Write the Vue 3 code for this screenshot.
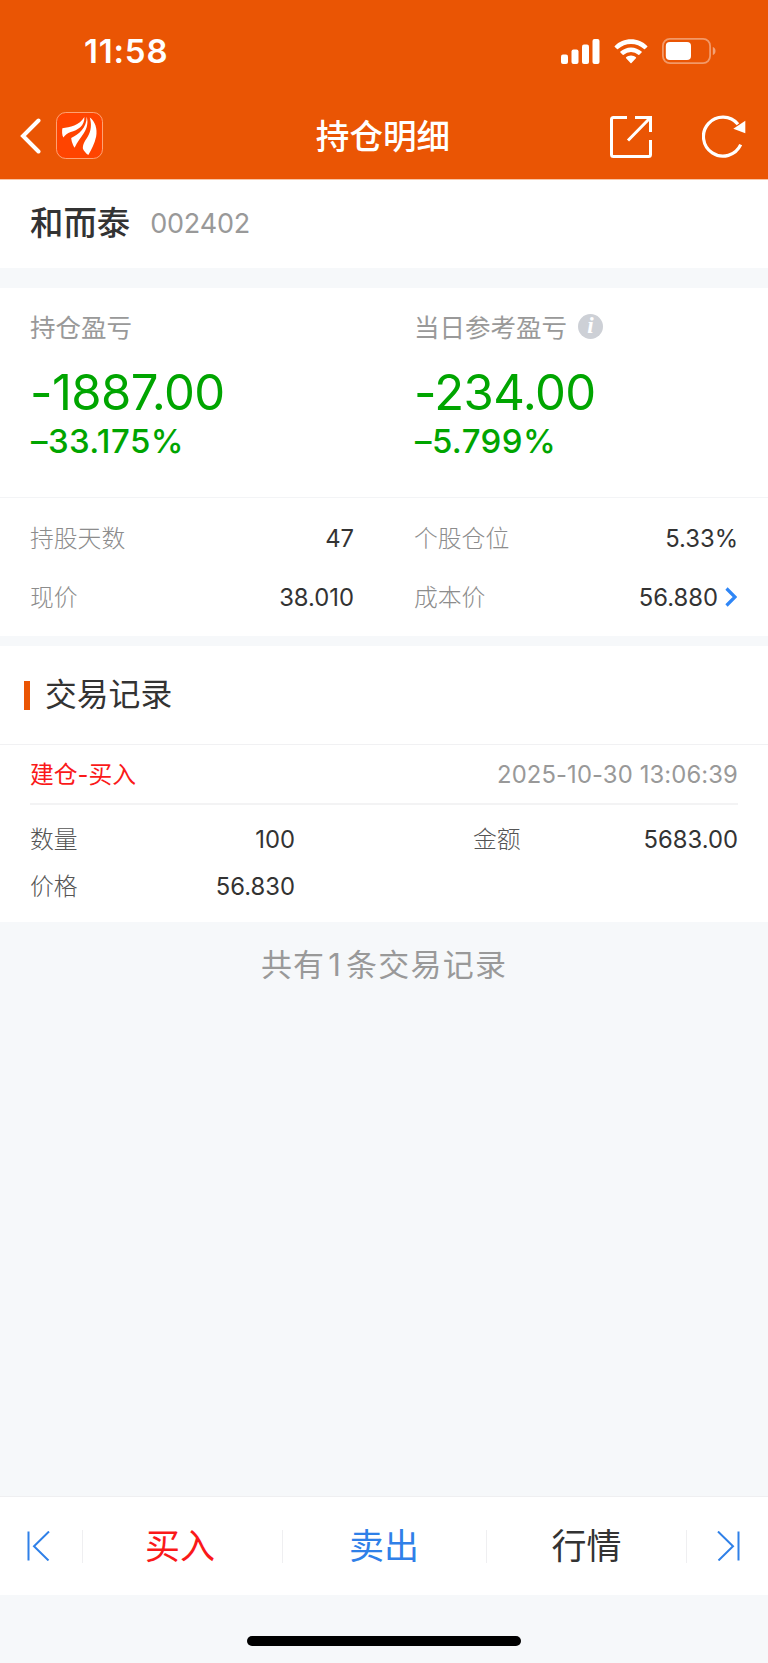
<template>
  <div class="page">
    <header class="header">
      <div class="status-bar">
        <span class="time">11:58</span>
        <div class="status-icons">
          <svg class="signal" viewBox="0 0 39 25">
            <rect x="0" y="15.5" width="7" height="9.5" rx="2" />
            <rect x="10.5" y="10.5" width="7" height="14.5" rx="2" />
            <rect x="21" y="5.5" width="7" height="19.5" rx="2" />
            <rect x="31.5" y="0" width="7" height="25" rx="2" />
          </svg>
          <svg class="wifi" viewBox="0 0 34 25">
            <path d="M17 0.3C23.300 0.300 29 2.800 33.200 6.900Q33.700 7.400 33.200 7.900L31 10.100Q30.500 10.500 30 10.100A18.800 18.800 0 0 0 4 10.100Q3.500 10.500 3 10.100L0.800 7.900Q0.300 7.400 0.800 6.900C5 2.800 10.700 0.300 17 0.300Z" />
            <path d="M17 8.400C21.100 8.400 24.800 10 27.600 12.600Q28.100 13.100 27.600 13.600L25.300 15.800Q24.800 16.200 24.300 15.800A10.800 10.800 0 0 0 9.700 15.800Q9.200 16.200 8.700 15.800L6.400 13.600Q5.900 13.100 6.400 12.600C9.200 10 12.900 8.400 17 8.400Z" />
            <path d="M17 16.400C18.900 16.400 20.600 17.100 21.900 18.200Q22.400 18.700 21.900 19.200L17.500 23.900Q17 24.400 16.500 23.900L12.100 19.200Q11.600 18.700 12.100 18.200C13.400 17.100 15.100 16.400 17 16.400Z" />
          </svg>
          <svg class="battery" viewBox="0 0 54 26">
            <rect x="0.900" y="0.900" width="47.200" height="24.200" rx="7" class="battery-shell" />
            <rect x="3.800" y="4" width="25.200" height="18" rx="4" />
            <path d="M50.800 9C52.500 9.500 53.500 11 53.500 13S52.500 16.500 50.800 17Z" class="battery-cap" />
          </svg>
        </div>
      </div>
      <div class="nav">
        <div class="nav-left">
          <svg class="back" viewBox="0 0 22 36">
            <path d="M18.500 2.500L3 18L18.500 33.500" />
          </svg>
          <svg class="logo" viewBox="0 0 48 48">
            <rect x="0.500" y="0.500" width="47" height="47" rx="9.500" class="logo-bg" />
            <path d="M6.500 16.500C14 15.500 24 13.500 29 5C29.500 14 22 18.500 15 20.500C11.500 21.700 9.500 23.500 7.500 26C6 23.500 6 19.500 6.500 16.500Z" />
            <path d="M31.300 4.800C33 10 32 16 28.500 21.500C25.500 26 21.500 31 19 36.500C17.500 34.500 17 32.500 16.200 30.500Q15.700 28 15.500 26.500C23 23 31.500 16 31.300 4.800Z" />
            <path d="M34.500 5.500C40 9.500 42.500 17 41 25C39.500 32.500 36 38.500 33 44C30.500 42 28.500 40 27.500 37.500C27 33 29.500 30 32.500 25C36 19 36.500 12 34.500 5.500Z" />
          </svg>
        </div>
        <h1 class="nav-title">持仓明细</h1>
        <div class="nav-right">
          <svg class="share" viewBox="0 0 42 42">
            <path d="M17 1.500H3.500Q1.500 1.500 1.500 3.500V38.500Q1.500 40.500 3.500 40.500H38.500Q40.500 40.500 40.500 38.500V24" />
            <path d="M25 1.500H40.500V16M40 2L18 24.500" />
          </svg>
          <svg class="refresh" viewBox="0 0 44 43">
            <path d="M38.700 29.700A19.500 19.500 0 1 1 36 9.200" class="refresh-line" />
            <path d="M43.300 5.800V18.300L31.300 13.800Z" class="refresh-arrow" />
          </svg>
        </div>
      </div>
    </header>

    <section class="stock">
      <span class="stock-name">和而泰</span>
      <span class="stock-code">002402</span>
    </section>

    <section class="profit">
      <div v-for="item in profits" :key="item.label" class="profit-item">
        <div class="profit-label">
          {{ item.label }}
          <span v-if="item.info" class="info">i</span>
        </div>
        <div class="profit-value">{{ item.value }}</div>
        <div class="profit-rate">{{ item.rate }}</div>
      </div>
    </section>

    <section class="metrics">
      <div v-for="item in metrics" :key="item.label" class="metric">
        <span class="metric-label">{{ item.label }}</span>
        <span class="metric-value">
          {{ item.value }}
          <svg v-if="item.link" class="chevron" viewBox="0 0 12 20">
            <path d="M1.500 1.500L10 10L1.500 18.500" />
          </svg>
        </span>
      </div>
    </section>

    <section class="records">
      <h2 class="records-title">交易记录</h2>
      <div class="record">
        <div class="record-head">
          <span class="record-type">建仓-买入</span>
          <span class="record-time">2025-10-30 13:06:39</span>
        </div>
        <div class="record-body">
          <div v-for="item in details" :key="item.label" class="detail">
            <span class="detail-label">{{ item.label }}</span>
            <span class="detail-value">{{ item.value }}</span>
          </div>
        </div>
      </div>
    </section>
    <p class="total">共有<span class="total-count">1</span>条交易记录</p>

    <footer class="footer">
      <div class="tabs">
        <button type="button" class="tab-arrow prev">
          <svg class="arrow" viewBox="0 0 23 30">
            <path d="M1.500 0.500V29.500M22 0.500L7 15.200L21.500 29.500" />
          </svg>
        </button>
        <button
          v-for="tab in tabs"
          :key="tab.text"
          type="button"
          class="tab"
          :class="tab.type"
        >
          {{ tab.text }}
        </button>
        <button type="button" class="tab-arrow next">
          <svg class="arrow" viewBox="0 0 23 30">
            <path d="M21.500 0.500V29.500M1 0.500L16 15.200L1.500 29.500" />
          </svg>
        </button>
      </div>
      <div class="home-bar"></div>
    </footer>
  </div>
</template>

<script setup>
import { ref } from 'vue';

const profits = ref([
  { label: '持仓盈亏', value: '-1887.00', rate: '–33.175%' },
  { label: '当日参考盈亏', value: '-234.00', rate: '–5.799%', info: true },
]);

const metrics = ref([
  { label: '持股天数', value: '47' },
  { label: '个股仓位', value: '5.33%' },
  { label: '现价', value: '38.010' },
  { label: '成本价', value: '56.880', link: true },
]);

const details = ref([
  { label: '数量', value: '100' },
  { label: '金额', value: '5683.00' },
  { label: '价格', value: '56.830' },
]);

const tabs = ref([
  { text: '买入', type: 'buy' },
  { text: '卖出', type: 'sell' },
  { text: '行情', type: 'quote' },
]);
</script>

<style>
body {
  margin: 0;
  background-color: #f6f8fa;
}
</style>

<style scoped>
.page {
  display: flex;
  flex-direction: column;
  width: 768px;
  height: 1663px;
  font-family: Inter, 'Noto Sans CJK SC', sans-serif;
  color: #333;
  background-color: #f6f8fa;
}
svg {
  display: block;
  flex-shrink: 0;
}

/* header */
.header {
  height: 179px;
  color: #fff;
  background-color: #ea5504;
  border-bottom: 1px solid #f8c4a5;
}
.status-bar {
  display: flex;
  justify-content: space-between;
  align-items: center;
  height: 102px;
  padding: 0 52px 0 84px;
}
.time {
  font-size: 33px;
  font-weight: 600;
  line-height: 42px;
  letter-spacing: 0.8px;
}
.status-icons {
  display: flex;
  align-items: center;
  gap: 14px;
  fill: #fff;
}
.signal {
  width: 39px;
  height: 25px;
}
.wifi {
  width: 34px;
  height: 25px;
}
.battery {
  width: 54px;
  height: 26px;
}
.battery-shell {
  fill: none;
  stroke: rgba(255, 255, 255, 0.4);
  stroke-width: 1.8;
}
.battery-cap {
  fill: rgba(255, 255, 255, 0.45);
}
.nav {
  display: grid;
  grid-template-columns: 1fr auto 1fr;
  align-items: center;
  height: 67px;
  padding: 0 22px 0 20px;
}
.nav-left {
  display: flex;
  align-items: center;
  gap: 14px;
}
.back {
  width: 22px;
  height: 36px;
  fill: none;
  stroke: #fff;
  stroke-width: 4;
  stroke-linecap: round;
}
.logo {
  width: 47px;
  height: 47px;
  fill: #fff;
}
.logo-bg {
  fill: #ff4400;
  stroke: #ffa477;
}
.nav-title {
  margin: 0;
  padding-top: 2px;
  font-size: 33.6px;
  font-weight: 500;
  line-height: 65px;
}
.nav-right {
  display: flex;
  justify-content: flex-end;
  align-items: center;
  gap: 50px;
  padding-top: 2px;
}
.share {
  width: 42px;
  height: 42px;
  fill: none;
  stroke: #fff;
  stroke-width: 3;
}
.refresh {
  width: 44px;
  height: 43px;
}
.refresh-line {
  fill: none;
  stroke: #fff;
  stroke-width: 3.2;
}
.refresh-arrow {
  fill: #fff;
}

/* stock */
.stock {
  display: flex;
  align-items: center;
  gap: 20px;
  height: 86px;
  padding: 0 30px 2px;
  line-height: 50px;
  background-color: #fff;
}
.stock-name {
  font-size: 33.4px;
  font-weight: 500;
}
.stock-code {
  padding-top: 1px;
  font-size: 27px;
  letter-spacing: -0.2px;
  color: #999;
}

/* profit */
.profit {
  display: grid;
  grid-template-columns: 384px 1fr;
  height: 188px;
  margin-top: 20px;
  padding: 21px 0 0 30px;
  background-color: #fff;
  border-bottom: 1px solid #f3f4f6;
}
.profit-label {
  display: flex;
  align-items: center;
  gap: 11px;
  font-size: 25.5px;
  line-height: 38px;
  color: #999;
}
.info {
  width: 25px;
  height: 25px;
  margin-top: -3px;
  border-radius: 50%;
  font-family: 'Liberation Serif', serif;
  font-size: 23px;
  font-style: italic;
  font-weight: bold;
  line-height: 24px;
  text-align: center;
  color: #fff;
  background-color: #cdd0d6;
}
.profit-value {
  margin-top: 18px;
  font-size: 49px;
  line-height: 56px;
  letter-spacing: -0.6px;
  color: #00a500;
}
.profit-rate {
  padding-left: 1px;
  font-size: 33px;
  font-weight: 500;
  line-height: 40px;
  letter-spacing: 0.4px;
  color: #00a500;
}

/* metrics */
.metrics {
  display: grid;
  grid-template-columns: 324px 324px;
  column-gap: 60px;
  padding: 11px 30px 9px;
  background-color: #fff;
}
.metric {
  display: flex;
  justify-content: space-between;
  font-size: 23.8px;
  line-height: 59px;
}
.metric-label {
  font-weight: 300;
  color: #8c8c8c;
}
.metric-value {
  display: flex;
  align-items: center;
  gap: 7px;
}
.chevron {
  width: 12px;
  height: 20px;
  margin: 0 1px 2px 0;
  fill: none;
  stroke: #2f86f6;
  stroke-width: 3.2;
}

/* records */
.records {
  margin-top: 10px;
  background-color: #fff;
}
.records-title {
  display: flex;
  align-items: center;
  gap: 15px;
  height: 98px;
  margin: 0;
  padding-left: 24px;
  font-size: 31.8px;
  font-weight: 400;
  line-height: 46px;
  border-bottom: 1px solid #f1f1f3;
}
.records-title::before {
  content: '';
  width: 6px;
  height: 29px;
  background-color: #ea5504;
}
.record {
  padding: 0 30px;
  font-size: 23.8px;
}
.record-head {
  display: flex;
  justify-content: space-between;
  padding-top: 1px;
  line-height: 57px;
  border-bottom: 2px solid #f3f3f4;
}
.record-type {
  color: #fa1919;
}
.record-time {
  letter-spacing: 0.13px;
  color: #999;
}
.record-body {
  display: grid;
  grid-template-columns: 265px 265px;
  justify-content: space-between;
  padding: 11px 0 12px;
}
.detail {
  display: flex;
  justify-content: space-between;
  line-height: 47px;
}
.detail-label {
  font-weight: 300;
  color: #555;
}
.total {
  margin: 0;
  padding-top: 1px;
  font-size: 31px;
  line-height: 84px;
  letter-spacing: 1.2px;
  text-align: center;
  color: #999;
}
.total-count {
  margin: 0 4px 0 3px;
}

/* footer */
.footer {
  margin-top: auto;
  height: 167px;
}
.tabs {
  display: grid;
  grid-template-columns: 82px 200px 204px 200px 82px;
  align-items: center;
  height: 98px;
  background-color: #fff;
  border-top: 1px solid #efeff1;
}
.tab,
.tab-arrow {
  height: 33px;
  padding: 0;
  border: none;
  border-left: 1px solid #efeff1;
  font-family: inherit;
  background: none;
}
.tab {
  font-size: 35px;
  line-height: 33px;
}
.buy {
  padding-right: 5px;
  color: #fa1919;
}
.sell {
  padding-right: 1px;
  color: #2f80e8;
}
.quote {
  color: #333;
}
.tab-arrow {
  display: flex;
  align-items: center;
}
.prev {
  justify-content: flex-start;
  padding-left: 27px;
  border-left: none;
}
.next {
  justify-content: flex-end;
  padding-right: 28px;
}
.arrow {
  width: 23px;
  height: 30px;
  fill: none;
  stroke: #2f80e8;
  stroke-width: 2;
}
.home-bar {
  width: 274px;
  height: 10px;
  margin: 41px auto 0;
  border-radius: 5px;
  background-color: #000;
}
</style>
